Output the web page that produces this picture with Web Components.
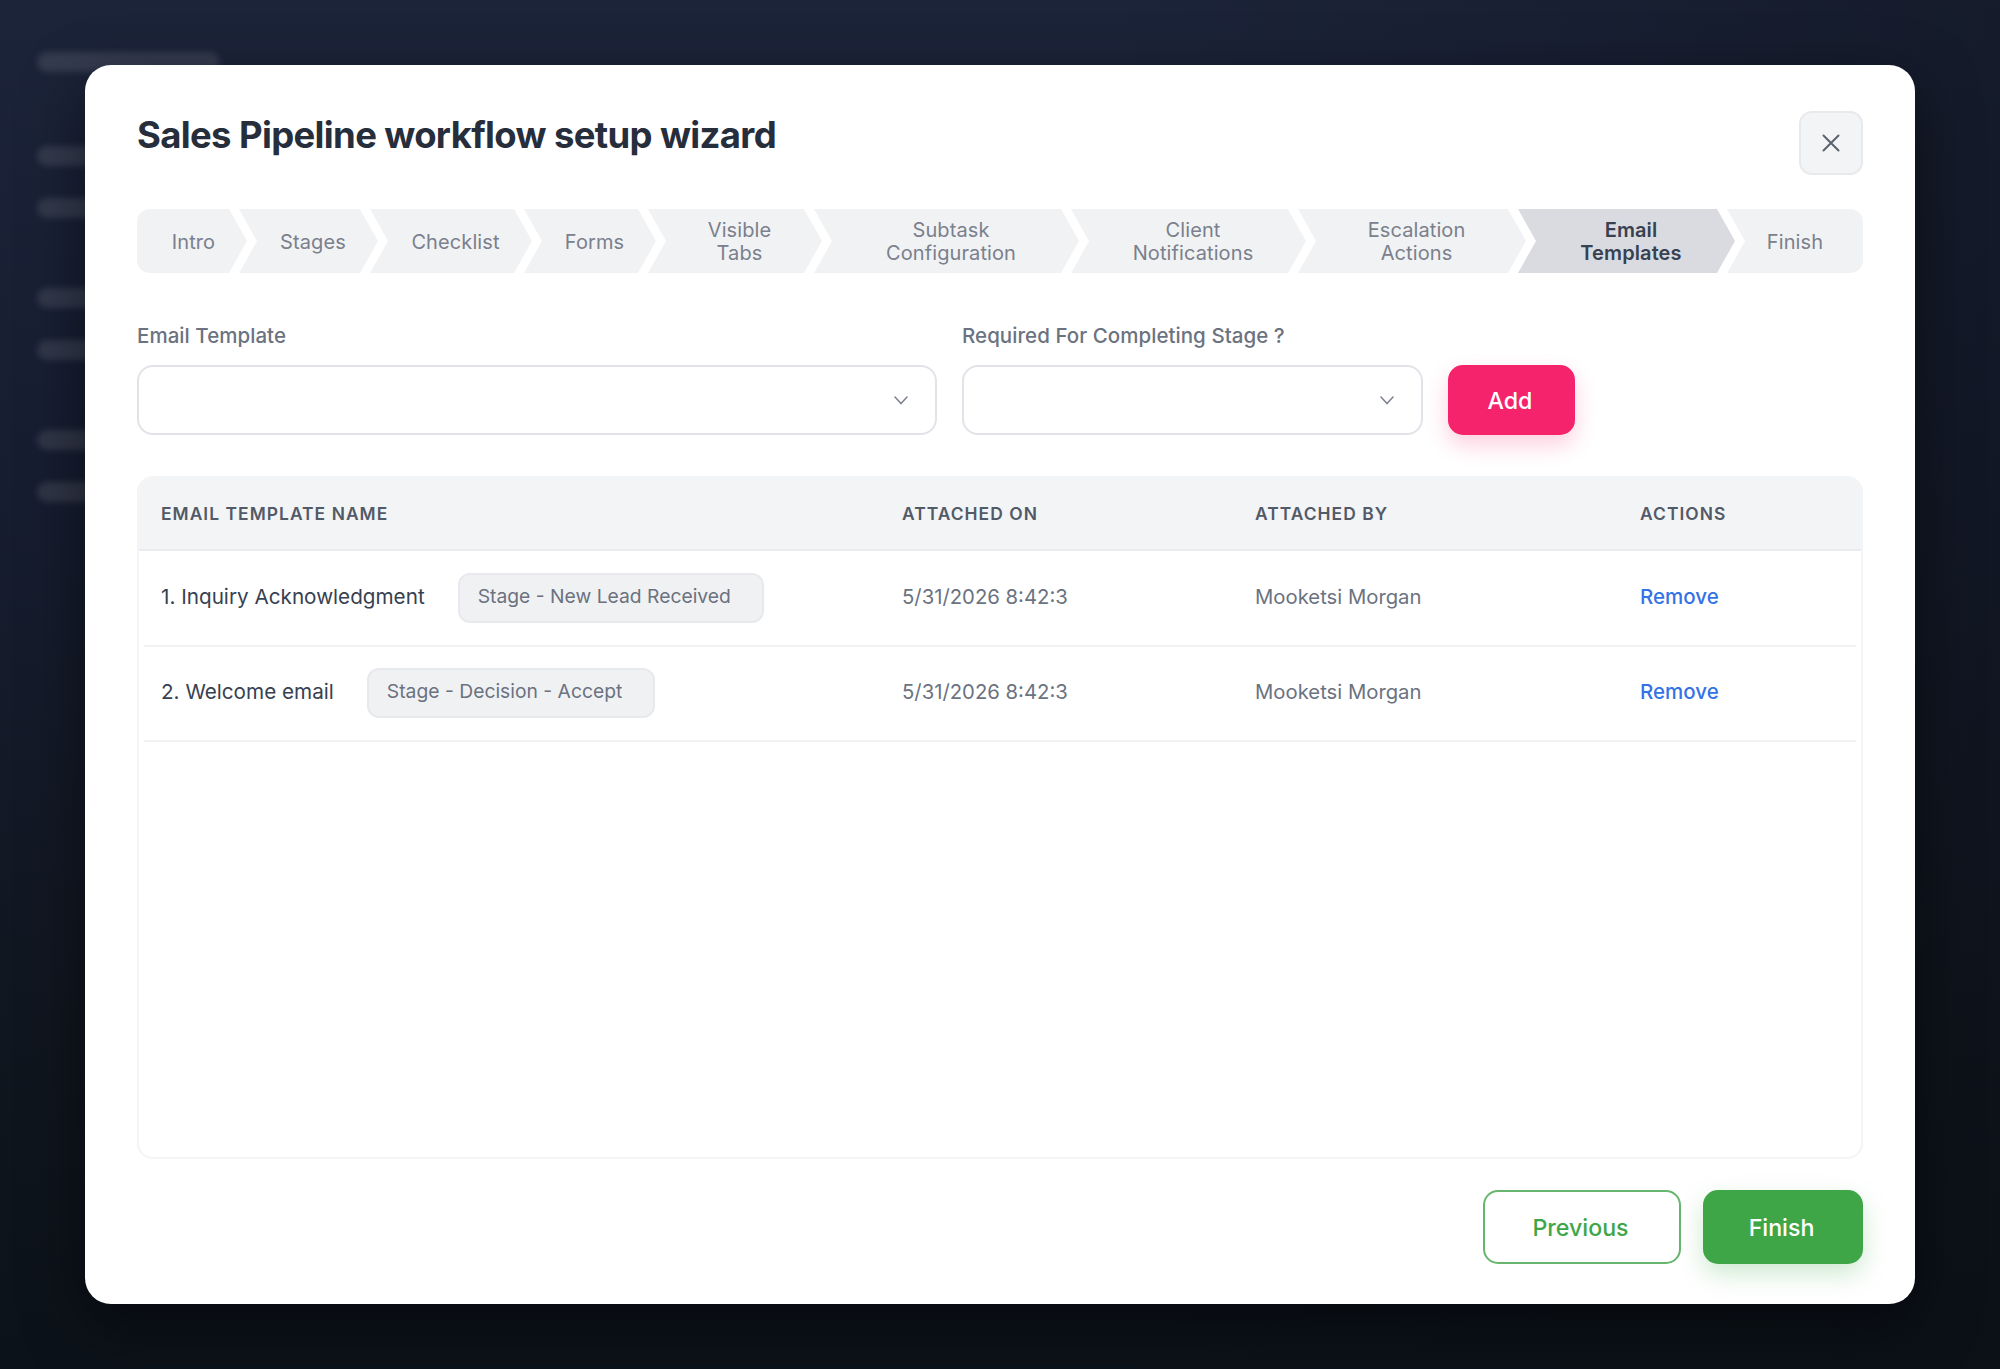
<!DOCTYPE html>
<html lang="en">
<head>
<meta charset="utf-8">
<title>Sales Pipeline workflow setup wizard</title>
<style>
    html, body { margin: 0; height: 100%; }
    body { font-family: Inter, "Liberation Sans", sans-serif; }
</style>
</head>
<body>
<app-backdrop>
    <wizard-modal>
        <span slot="title">Sales Pipeline workflow setup wizard</span>

        <wizard-steps slot="steps">
            <wizard-step style="--w:110px">Intro</wizard-step>
            <wizard-step style="--w:139px">Stages</wizard-step>
            <wizard-step style="--w:162px">Checklist</wizard-step>
            <wizard-step style="--w:132px">Forms</wizard-step>
            <wizard-step style="--w:174px">Visible<br>Tabs</wizard-step>
            <wizard-step style="--w:265px">Subtask<br>Configuration</wizard-step>
            <wizard-step style="--w:235px">Client<br>Notifications</wizard-step>
            <wizard-step style="--w:228px">Escalation<br>Actions</wizard-step>
            <wizard-step style="--w:217px" active>Email<br>Templates</wizard-step>
            <wizard-step style="--w:136px">Finish</wizard-step>
        </wizard-steps>

        <select-field slot="form">Email Template</select-field>
        <select-field slot="form">Required For Completing Stage ?</select-field>
        <app-button slot="form" kind="add">Add</app-button>

        <template-table slot="table">
            <template-row stage="Stage - New Lead Received" date="5/31/2026 8:42:3" user="Mooketsi Morgan">1. Inquiry Acknowledgment</template-row>
            <template-row stage="Stage - Decision - Accept" date="5/31/2026 8:42:3" user="Mooketsi Morgan">2. Welcome email</template-row>
        </template-table>

        <app-button slot="footer" kind="outline">Previous</app-button>
        <app-button slot="footer" kind="finish">Finish</app-button>
    </wizard-modal>
</app-backdrop>

<script>
const backdropTemplate = document.createElement('template');
backdropTemplate.innerHTML = `
<style>
    :host {
        display: block;
        position: relative;
        height: 1369px;
        overflow: hidden;
        background:
            linear-gradient(90deg, rgba(10, 14, 20, 0) 55%, rgba(10, 14, 20, .4) 100%),
            linear-gradient(180deg, #1c243a 0%, #171e32 30%, #10161f 75%, #0c1219 100%);
    }
    #sidebar {
        display: flex;
        flex-direction: column;
        width: 183px;
        padding: 52px 0 0 37px;
        filter: blur(3px);
    }
    #sidebar div {
        height: 20px;
        border-radius: 10px;
        background: rgba(255, 255, 255, .11);
    }
    #sidebar .brand { margin-bottom: 74px; }
    #sidebar .a { margin-bottom: 32px; }
    #sidebar .b { margin-bottom: 70px; }
</style>
<section id="sidebar">
    <div class="brand"></div>
    <div class="a"></div><div class="b"></div>
    <div class="a"></div><div class="b"></div>
    <div class="a"></div><div></div>
</section>
<slot></slot>`;

class AppBackdrop extends HTMLElement {
    constructor() {
        super();
        this.attachShadow({ mode: 'open' });
        this.shadowRoot.appendChild(backdropTemplate.content.cloneNode(true));
    }
}

const modalTemplate = document.createElement('template');
modalTemplate.innerHTML = `
<style>
    :host {
        position: absolute;
        left: 85px;
        top: 65px;
        width: 1830px;
        height: 1239px;
        box-sizing: border-box;
        padding: 46px 52px 40px;
        display: flex;
        flex-direction: column;
        background: #fff;
        border-radius: 26px;
        box-shadow: 0 20px 60px rgba(0, 0, 0, .5);
    }
    header {
        display: flex;
        justify-content: space-between;
        align-items: flex-start;
        height: 64px;
        margin-bottom: 34px;
    }
    h1 {
        margin: 0;
        font-size: 36.5px;
        line-height: 48px;
        font-weight: 700;
        letter-spacing: -.65px;
        color: #262e3c;
    }
    #close {
        width: 64px;
        height: 64px;
        box-sizing: border-box;
        padding: 0;
        display: flex;
        align-items: center;
        justify-content: center;
        background: #f3f4f6;
        border: 2px solid #e8e9ec;
        border-radius: 13px;
        color: #5b6370;
    }
    #form {
        display: grid;
        grid-template-columns: 800px 461px 127px;
        column-gap: 25px;
        align-items: end;
        margin-top: 51px;
        margin-bottom: 41px;
    }
    #table { flex: 1; display: flex; min-height: 0; }
    footer {
        display: flex;
        justify-content: flex-end;
        gap: 22px;
        margin-top: 31px;
    }
</style>
<header>
    <h1><slot name="title"></slot></h1>
    <button type="button" id="close" aria-label="Close">
        <svg width="24" height="24" viewBox="0 0 24 24" fill="none" stroke="currentColor" stroke-width="2" stroke-linecap="round"><path d="M4.5 4.5l15 15M19.5 4.5l-15 15"/></svg>
    </button>
</header>
<slot name="steps"></slot>
<div id="form"><slot name="form"></slot></div>
<div id="table"><slot name="table"></slot></div>
<footer><slot name="footer"></slot></footer>`;

class WizardModal extends HTMLElement {
    constructor() {
        super();
        this.attachShadow({ mode: 'open' });
        this.shadowRoot.appendChild(modalTemplate.content.cloneNode(true));
    }
}

const stepsTemplate = document.createElement('template');
stepsTemplate.innerHTML = `
<style>
    :host { display: flex; height: 64px; }
</style>
<slot></slot>`;

class WizardSteps extends HTMLElement {
    constructor() {
        super();
        this.attachShadow({ mode: 'open' });
        this.shadowRoot.appendChild(stepsTemplate.content.cloneNode(true));
    }
}

const stepTemplate = document.createElement('template');
stepTemplate.innerHTML = `
<style>
    :host {
        display: block;
        flex: 0 0 var(--w);
        margin-left: -8px;
        color: #7a808c;
        font-size: 20px;
        line-height: 23px;
        letter-spacing: .1px;
    }
    :host(:first-child) { margin-left: 0; }
    :host(:last-child) { flex: 1 1 auto; }
    :host([active]) { color: #374151; font-weight: 600; }
    div {
        height: 100%;
        box-sizing: border-box;
        padding: 2px 0 0 9px;
        display: flex;
        align-items: center;
        justify-content: center;
        text-align: center;
        background: #f1f2f4;
        clip-path: polygon(0 0, calc(100% - 18px) 0, 100% 50%, calc(100% - 18px) 100%, 0 100%, 18px 50%);
    }
    :host([active]) div { background: #d9dbe1; }
    :host(:first-child) div {
        padding-left: 3px;
        border-radius: 13px 0 0 13px;
        clip-path: polygon(0 0, calc(100% - 18px) 0, 100% 50%, calc(100% - 18px) 100%, 0 100%);
    }
    :host(:last-child) div {
        padding-left: 0;
        border-radius: 0 13px 13px 0;
        clip-path: polygon(0 0, 100% 0, 100% 100%, 0 100%, 18px 50%);
    }
</style>
<div><span><slot></slot></span></div>`;

class WizardStep extends HTMLElement {
    constructor() {
        super();
        this.attachShadow({ mode: 'open' });
        this.shadowRoot.appendChild(stepTemplate.content.cloneNode(true));
    }
}

const selectTemplate = document.createElement('template');
selectTemplate.innerHTML = `
<style>
    :host { display: block; }
    label {
        display: block;
        margin-bottom: 17px;
        font-size: 20.5px;
        line-height: 24px;
        font-weight: 500;
        letter-spacing: .05px;
        color: #6b7280;
    }
    #box {
        height: 70px;
        box-sizing: border-box;
        padding-right: 27px;
        display: flex;
        align-items: center;
        justify-content: flex-end;
        background: #fff;
        border: 2px solid #e1e3e8;
        border-radius: 16px;
        color: #7b818c;
    }
</style>
<label><slot></slot></label>
<div id="box">
    <svg width="14" height="9" viewBox="0 0 14 9" fill="none" stroke="currentColor" stroke-width="1.5" stroke-linecap="round" stroke-linejoin="round"><path d="M1 1l6 6.6L13 1"/></svg>
</div>`;

class SelectField extends HTMLElement {
    constructor() {
        super();
        this.attachShadow({ mode: 'open' });
        this.shadowRoot.appendChild(selectTemplate.content.cloneNode(true));
    }
}

const buttonTemplate = document.createElement('template');
buttonTemplate.innerHTML = `
<style>
    :host { display: block; }
    button {
        display: block;
        box-sizing: border-box;
        width: 100%;
        font: 500 23.2px Inter, "Liberation Sans", sans-serif;
        border: 0;
        padding: 2px 3px 0 0;
    }
    :host([kind="add"]) button {
        height: 70px;
        background: #f4236c;
        color: #fff;
        border-radius: 15px;
        box-shadow: 0 10px 22px rgba(244, 35, 108, .22);
    }
    :host([kind="outline"]) button {
        width: 198px;
        height: 74px;
        background: #fff;
        color: #3fa648;
        border: 2px solid #66b76d;
        border-radius: 15px;
    }
    :host([kind="finish"]) button {
        width: 160px;
        height: 74px;
        background: #3fa648;
        color: #fff;
        border-radius: 15px;
        box-shadow: 0 10px 24px rgba(63, 166, 72, .25);
    }
</style>
<button type="button"><slot></slot></button>`;

class AppButton extends HTMLElement {
    constructor() {
        super();
        this.attachShadow({ mode: 'open' });
        this.shadowRoot.appendChild(buttonTemplate.content.cloneNode(true));
    }
}

const tableTemplate = document.createElement('template');
tableTemplate.innerHTML = `
<style>
    :host {
        display: block;
        flex: 1;
        box-sizing: border-box;
        border: 2px solid #f3f4f6;
        border-radius: 16px;
        overflow: hidden;
    }
    #head {
        display: grid;
        grid-template-columns: 741px 353px 385px 1fr;
        align-items: center;
        height: 71px;
        padding: 0 21px 0 22px;
        background: #f3f4f6;
        border-bottom: 2px solid #e9ebee;
        font-size: 17.4px;
        font-weight: 600;
        letter-spacing: 1.05px;
        color: #525a67;
    }
</style>
<div id="head">
    <span>EMAIL TEMPLATE NAME</span>
    <span>ATTACHED ON</span>
    <span>ATTACHED BY</span>
    <span>ACTIONS</span>
</div>
<slot></slot>`;

class TemplateTable extends HTMLElement {
    constructor() {
        super();
        this.attachShadow({ mode: 'open' });
        this.shadowRoot.appendChild(tableTemplate.content.cloneNode(true));
    }
}

const rowTemplate = document.createElement('template');
rowTemplate.innerHTML = `
<style>
    :host {
        display: grid;
        grid-template-columns: 741px 353px 385px 1fr;
        align-items: center;
        height: 93.5px;
        margin: 0 5px;
        padding: 0 16px 0 17px;
        border-bottom: 2px solid #f1f2f4;
        font-size: 20.3px;
        color: #6b7280;
    }
    #name {
        display: flex;
        align-items: center;
        gap: 33.5px;
        font-size: 20.7px;
        color: #374151;
    }
    #name > span:first-child, #date, #user, a { padding-bottom: 3px; }
    #stage {
        box-sizing: border-box;
        height: 50px;
        padding: 0 31px 4px 17.5px;
        display: flex;
        align-items: center;
        background: #f0f1f3;
        border: 2px solid #e8e9ec;
        border-radius: 12px;
        font-size: 19.3px;
        color: #6b7280;
    }
    a { color: #3572e6; font-weight: 500; font-size: 20.5px; text-decoration: none; }
</style>
<div id="name"><span><slot></slot></span><span id="stage"></span></div>
<span id="date"></span>
<span id="user"></span>
<a href="#">Remove</a>`;

class TemplateRow extends HTMLElement {
    constructor() {
        super();
        this.attachShadow({ mode: 'open' });
        this.shadowRoot.appendChild(rowTemplate.content.cloneNode(true));
    }

    connectedCallback() {
        for (const key of ['stage', 'date', 'user']) {
            this.shadowRoot.querySelector('#' + key).textContent = this.getAttribute(key);
        }
    }
}

window.customElements.define('app-backdrop', AppBackdrop);
window.customElements.define('wizard-modal', WizardModal);
window.customElements.define('wizard-steps', WizardSteps);
window.customElements.define('wizard-step', WizardStep);
window.customElements.define('select-field', SelectField);
window.customElements.define('app-button', AppButton);
window.customElements.define('template-table', TemplateTable);
window.customElements.define('template-row', TemplateRow);
</script>
</body>
</html>
